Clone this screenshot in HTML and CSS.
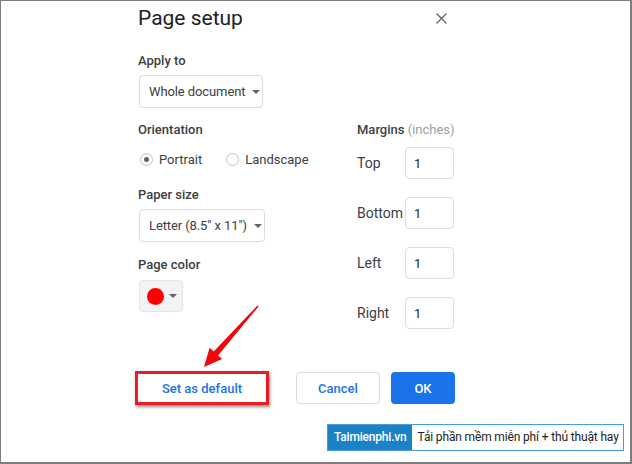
FILE: index.html
```html
<!DOCTYPE html>
<html>
<head>
<meta charset="utf-8">
<link rel="stylesheet" href="styles.css">
</head>
<body>
<div class="frame">
  <div class="dialog">
    <div class="header">
      <h1 class="title">Page setup</h1>
      <svg class="close" width="11" height="11" viewBox="0 0 11 11"><path d="M0.5 0.5L10.5 10.5M10.5 0.5L0.5 10.5" stroke="#5f6368" stroke-width="1.3" fill="none"/></svg>
    </div>
    <div class="label label-apply">Apply to</div>
    <div class="select select-apply"><span class="sel-text">Whole document</span><span class="caret"></span></div>
    <div class="columns">
      <div class="left">
        <div class="label">Orientation</div>
        <div class="radios">
          <span class="radio checked"></span><span class="radio-text">Portrait</span>
          <span class="radio radio-2"></span><span class="radio-text">Landscape</span>
        </div>
        <div class="label label-paper">Paper size</div>
        <div class="select select-paper"><span class="sel-text">Letter (8.5" x 11")</span><span class="caret"></span></div>
        <div class="label label-color">Page color</div>
        <div class="color-btn"><span class="swatch"></span><span class="caret"></span></div>
      </div>
      <div class="right">
        <div class="label">Margins <span class="muted">(inches)</span></div>
        <div class="margin-row"><span class="m-label">Top</span><span class="m-input">1</span></div>
        <div class="margin-row"><span class="m-label">Bottom</span><span class="m-input">1</span></div>
        <div class="margin-row"><span class="m-label">Left</span><span class="m-input">1</span></div>
        <div class="margin-row"><span class="m-label">Right</span><span class="m-input">1</span></div>
      </div>
    </div>
    <div class="actions">
      <div class="btn-default">Set as default</div>
      <div class="btn-cancel">Cancel</div>
      <div class="btn-ok">OK</div>
    </div>
  </div>
  <svg class="arrow" width="632" height="464" viewBox="0 0 632 464">
    <polygon points="257.4,305.6 213.7,351.5 209.6,347.8 204,367 222.2,359 218.1,355.5 258.6,306.4" fill="#f0060b"/>
  </svg>
  <div class="watermark">
    <span class="wm-brand">Taimienphi.vn</span><span class="wm-text">Tải phần mềm miễn phí + thủ thuật hay</span>
  </div>
</div>
</body>
</html>
```
FILE: styles.css
```css
* { box-sizing: border-box; }
html, body { margin: 0; padding: 0; background: #fff; }
body { font-family: Roboto, "Liberation Sans", sans-serif; color: #202124; }
.frame {
  position: relative;
  width: 632px;
  height: 464px;
  border-style: solid;
  border-color: #7d7d7d;
  border-width: 1px 2px 2px 1px;
  overflow: hidden;
}
.dialog { padding: 3px 0 0 137px; }
.header { display: flex; align-items: center; justify-content: space-between; width: 310px; height: 28px; }
.title { margin: 0; font-family: Roboto, sans-serif; font-weight: 400; font-size: 21px; line-height: 28px; color: #202124; }
.close { display: block; margin-right: 1px; }
.label { font-size: 13px; font-weight: 500; line-height: 20px; color: #3c4043; }
.label-apply { margin-top: 19px; }
.muted { color: #9aa0a6; font-weight: 400; }
.select {
  display: flex; align-items: center; gap: 7px;
  height: 33px; margin-top: 4px; padding: 0 0 0 9px;
  border: 1px solid #dadce0; border-radius: 4px;
  font-size: 13px; color: #3c4043; white-space: nowrap;
}
.sel-text { letter-spacing: -0.1px; }
.select-apply { width: 124px; margin-left: 1px; }
.select-paper { width: 126px; margin-left: 1px; }
.caret { flex: none; width: 0; height: 0; border-left: 4px solid transparent; border-right: 4px solid transparent; border-top: 4px solid #5f6368; }
.columns { display: flex; margin-top: 12px; }
.left { width: 218px; }
.radios { display: flex; align-items: center; height: 20px; margin-top: 9px; font-size: 13px; color: #3c4043; }
.radio { width: 13px; height: 13px; border: 1px solid #bdc1c6; border-radius: 50%; margin-left: 2px; display: flex; align-items: center; justify-content: center; }
.radio.checked::after { content: ""; width: 5px; height: 5px; border-radius: 50%; background: #5f6368; }
.radio-text { margin-left: 6px; }
.radio-2 { margin-left: 24px; }
.label-paper { margin-top: 16px; }
.label-color { margin-top: 13px; }
.color-btn {
  display: flex; align-items: center; gap: 5px;
  width: 44px; height: 32px; margin: 5px 0 0 1px; padding-left: 7px;
  background: #f1f3f4; border: 1px solid #e3e5e8; border-radius: 4px;
}
.swatch { width: 17px; height: 17px; border-radius: 50%; background: #fe0000; }
.right { display: flex; flex-direction: column; }
.right .label { margin-left: 1px; }
.margin-row { display: flex; align-items: center; margin-top: 7px; height: 32px; font-size: 14px; color: #3c4043; }
.margin-row + .margin-row { margin-top: 18px; }
.m-label { width: 49px; padding-left: 1px; }
.m-input {
  width: 49px; height: 32px; padding: 0 0 0 8px;
  display: flex; align-items: center;
  border: 1px solid #dadce0; border-radius: 4px; font-size: 13px; color: #202124;
}
.actions { display: flex; align-items: center; margin: 42px 0 0 -3px; font-size: 13px; font-weight: 500; }
.btn-default {
  width: 134px; height: 34px; display: flex; align-items: center; justify-content: center;
  border: 3px solid #ec1c24; color: #1a73e8;
  box-shadow: 1px 2px 3px rgba(0,0,0,0.45);
}
.btn-cancel {
  width: 84px; height: 32px; margin-left: 27px; display: flex; align-items: center; justify-content: center;
  border: 1px solid #dadce0; border-radius: 4px; color: #1a73e8;
}
.btn-ok {
  width: 64px; height: 32px; margin-left: 11px; display: flex; align-items: center; justify-content: center;
  background: #1a73e8; color: #fff; border-radius: 4px;
}
.arrow { position: absolute; left: -1px; top: -1px; }
.watermark {
  position: absolute; left: 326px; top: 423px;
  display: flex; height: 27px; border: 1px solid #4c9bd6;
  font-size: 12px; line-height: 25px; white-space: nowrap;
}
.wm-brand { background: #1b82c8; color: #fff; font-weight: 500; padding: 0 5px 0 6px; letter-spacing: -0.2px; }
.wm-text { background: #fff; color: #222; padding: 0 4px 0 6px; letter-spacing: -0.15px; }
```
